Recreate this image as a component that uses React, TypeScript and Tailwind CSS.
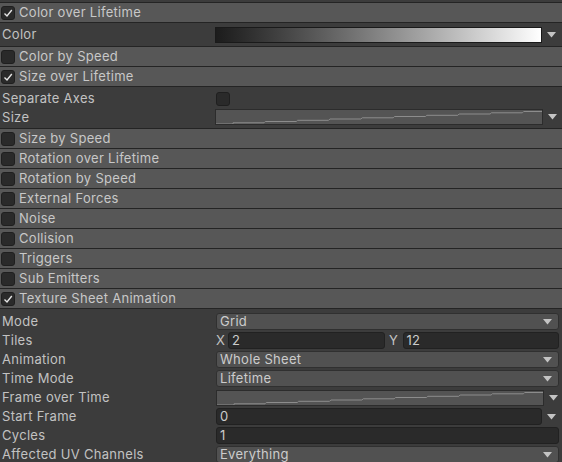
import React from "react";

const font = { fontFamily: "Inter, 'Noto Sans', sans-serif" };

function Check({ checked }: { checked?: boolean }) {
  return (
    <div className="w-[14px] h-[14px] shrink-0 rounded-[3px] bg-[#2a2a2a] border border-[#1f1f1f] flex items-center justify-center">
      {checked && (
        <svg width="10" height="10" viewBox="0 0 10 10">
          <path d="M1.5 5.5 L4 8 L8.8 2" stroke="#e6e6e6" strokeWidth="1.4" fill="none" />
        </svg>
      )}
    </div>
  );
}

function Arrow() {
  return (
    <svg width="9" height="6" viewBox="0 0 9 6" className="shrink-0">
      <path d="M0 0 H9 L4.5 5.5 Z" fill="#c4c4c4" />
    </svg>
  );
}

function Header({ label, checked, open }: { label: string; checked?: boolean; open?: boolean }) {
  return (
    <div className={`h-[20px] border-t border-[#242424] bg-[#575757] flex items-center pl-[1px] gap-[4px] text-[#c8c8c8] ${open ? "border-b h-[21px]" : ""}`}>
      <Check checked={checked} />
      <span>{label}</span>
    </div>
  );
}

function Curve() {
  const w = 326;
  let pts = "0,14 17,14";
  for (let i = 1; i <= 10; i++) {
    const x = 17 + (i - 1) * 32.3;
    const y = 14 - i * 1.25;
    pts += ` ${x.toFixed(1)},${y.toFixed(1)} ${(x + 31).toFixed(1)},${y.toFixed(1)}`;
  }
  return (
    <div className="flex-1 h-[16px] bg-[#545454] border border-[#2c2c2c] overflow-hidden">
      <svg width={w} height="14" viewBox={`0 0 ${w} 14`} className="block">
        <polyline points={pts} fill="none" stroke="#8c8c8c" strokeWidth="1" />
      </svg>
    </div>
  );
}

function Row({ label, children, h = "h-[19px]" }: { label: string; children?: React.ReactNode; h?: string }) {
  return (
    <div className={`${h} flex items-center`}>
      <div className="w-[216px] shrink-0 pl-[2px] text-[#c2c2c2]">{label}</div>
      <div className="flex-1 flex items-center pr-[3px]">{children}</div>
    </div>
  );
}

function Dropdown({ value }: { value: string }) {
  return (
    <div className="flex-1 h-[17px] rounded-[3px] bg-[#515151] border border-[#303030] flex items-center justify-between pl-[3px] pr-[6px] text-[#cccccc]">
      <span>{value}</span>
      <Arrow />
    </div>
  );
}

function Field({ value }: { value: string }) {
  return (
    <div className="flex-1 h-[17px] rounded-[3px] bg-[#2a2a2a] border border-[#212121] flex items-center pl-[3px] text-[#cccccc]">
      {value}
    </div>
  );
}

function WithArrow({ children }: { children: React.ReactNode }) {
  return (
    <div className="flex-1 flex items-center">
      {children}
      <div className="w-[17px] flex justify-center pl-[2px]">
        <Arrow />
      </div>
    </div>
  );
}

export default function App() {
  const collapsed = [
    "Size by Speed",
    "Rotation over Lifetime",
    "Rotation by Speed",
    "External Forces",
    "Noise",
    "Collision",
    "Triggers",
    "Sub Emitters",
  ];
  return (
    <div style={font} className="w-[562px] h-[462px] overflow-hidden bg-[#3c3c3c] text-[13px] tracking-[0.3px] leading-none pt-[2px]">
      <Header label="Color over Lifetime" checked open />
      <div className="h-[23px] flex items-center pr-[3px]">
        <div className="w-[215px] shrink-0 pl-[2px] text-[#c2c2c2]">Color</div>
        <WithArrow>
          <div className="flex-1 h-[16px] border border-[#1a1a1a] bg-gradient-to-r from-[#1c1c1c] to-[#ffffff]" />
        </WithArrow>
      </div>
      <Header label="Color by Speed" />
      <Header label="Size over Lifetime" checked open />
      <div className="h-[41px] pt-[2px]">
        <Row label="Separate Axes" h="h-[19px]">
          <Check />
        </Row>
        <div className="h-[18px] flex items-center pr-[3px]">
          <div className="w-[215px] shrink-0 pl-[2px] text-[#c2c2c2]">Size</div>
          <WithArrow>
            <Curve />
          </WithArrow>
        </div>
      </div>
      {collapsed.map((c) => (
        <Header key={c} label={c} />
      ))}
      <Header label="Texture Sheet Animation" checked open />
      <div className="pt-[3px]">
        <Row label="Mode">
          <Dropdown value="Grid" />
        </Row>
        <Row label="Tiles">
          <span className="w-[12px] text-[#c2c2c2]">X</span>
          <Field value="2" />
          <span className="w-[18px] text-center text-[#c2c2c2]">Y</span>
          <Field value="12" />
        </Row>
        <Row label="Animation">
          <Dropdown value="Whole Sheet" />
        </Row>
        <Row label="Time Mode">
          <Dropdown value="Lifetime" />
        </Row>
        <Row label="Frame over Time">
          <WithArrow>
            <Curve />
          </WithArrow>
        </Row>
        <Row label="Start Frame">
          <WithArrow>
            <Field value="0" />
          </WithArrow>
        </Row>
        <Row label="Cycles">
          <Field value="1" />
        </Row>
        <Row label="Affected UV Channels">
          <Dropdown value="Everything" />
        </Row>
      </div>
    </div>
  );
}
